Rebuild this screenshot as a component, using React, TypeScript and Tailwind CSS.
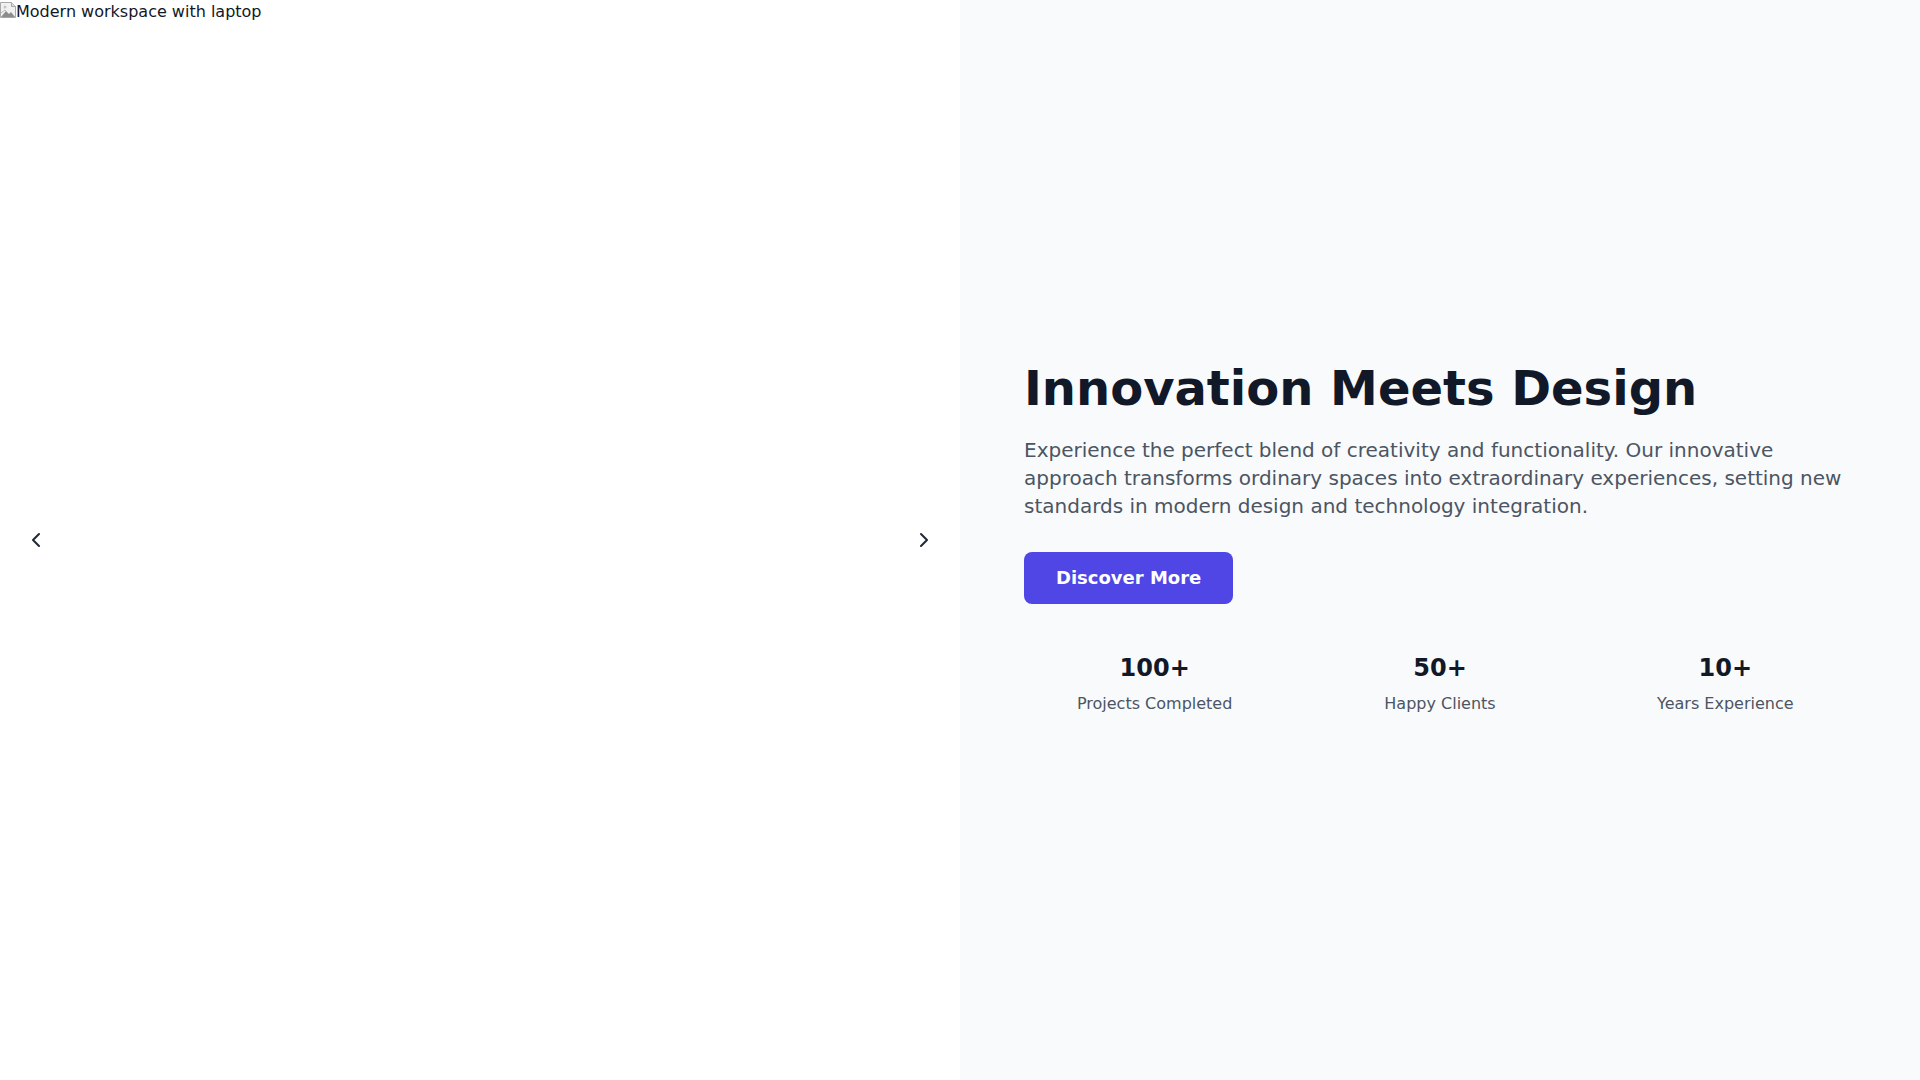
import React, { useState } from "react";
import { ChevronLeft, ChevronRight } from "lucide-react";

const stats = [
  { value: "100+", label: "Projects Completed" },
  { value: "50+", label: "Happy Clients" },
  { value: "10+", label: "Years Experience" },
];

// stand-in for the browser's broken image glyph
function BrokenImageIcon() {
  return (
    <svg width="16" height="16" viewBox="0 0 16 16" className="shrink-0 mt-[2px]">
      <path d="M0.5 0.5h11l4 4v11h-15z" fill="#f1f1f1" stroke="#a8a8a8" />
      <path d="M11.5 0.5v4h4" fill="#dcdcdc" stroke="#a8a8a8" />
      <path d="M1 15l5-6 3 3 2-2 4 5z" fill="#8c8c8c" />
      <path d="M1 11l4-3 2 2" fill="none" stroke="#bdbdbd" />
      <circle cx="5" cy="5" r="1.5" fill="#c4c4c4" />
    </svg>
  );
}

export default function App() {
  const [slide, setSlide] = useState(0);

  return (
    <div
      className="flex h-screen w-full bg-white text-[#111827]"
      style={{ fontFamily: '"DejaVu Sans", sans-serif' }}
    >
      {/* Image slider */}
      <div className="relative w-1/2 h-full overflow-hidden bg-white">
        <div className="flex items-start text-base leading-6" data-slide={slide}>
          <BrokenImageIcon />
          <span>Modern workspace with laptop</span>
        </div>

        <button
          onClick={() => setSlide((s) => (s + 2) % 3)}
          className="absolute left-4 top-1/2 -translate-y-1/2 p-2 rounded-full bg-white/80 text-[#1f2937]"
        >
          <ChevronLeft size={24} />
        </button>
        <button
          onClick={() => setSlide((s) => (s + 1) % 3)}
          className="absolute right-4 top-1/2 -translate-y-1/2 p-2 rounded-full bg-white/80 text-[#1f2937]"
        >
          <ChevronRight size={24} />
        </button>
      </div>

      {/* Content */}
      <div className="w-1/2 h-full bg-[#f9fafb] flex flex-col justify-center px-16">
        <h1 className="text-5xl leading-none font-bold text-[#111827] mb-6">
          Innovation Meets Design
        </h1>
        <p className="text-xl leading-7 text-[#4b5563] mb-8">
          Experience the perfect blend of creativity and functionality. Our innovative
          approach transforms ordinary spaces into extraordinary experiences, setting new
          standards in modern design and technology integration.
        </p>
        <div>
          <button className="bg-[#4f46e5] text-white text-lg leading-7 font-bold px-8 py-3 rounded-lg">
            Discover More
          </button>
        </div>

        <div className="grid grid-cols-3 gap-6 mt-12">
          {stats.map((s) => (
            <div key={s.label} className="text-center">
              <div className="text-2xl font-bold text-[#111827] mb-2">{s.value}</div>
              <div className="text-base text-[#4b5563]">{s.label}</div>
            </div>
          ))}
        </div>
      </div>
    </div>
  );
}
